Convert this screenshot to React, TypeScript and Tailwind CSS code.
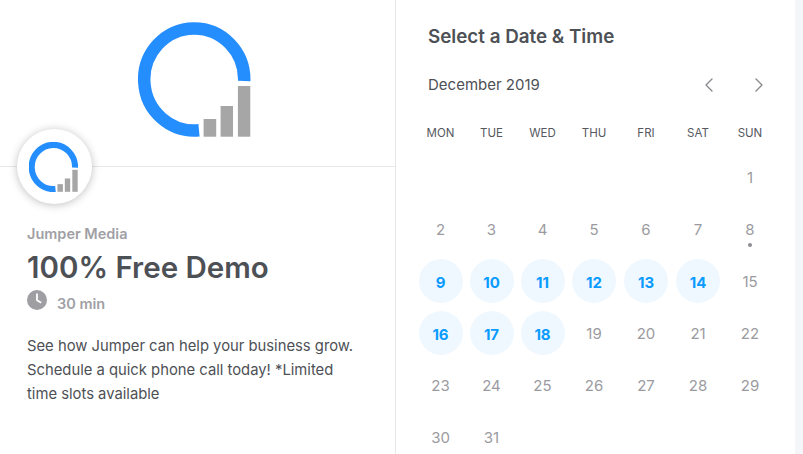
import React from 'react';
import { ChevronLeft, ChevronRight } from 'lucide-react';

const DAYS = ['MON', 'TUE', 'WED', 'THU', 'FRI', 'SAT', 'SUN'];
const AVAILABLE = [9, 10, 11, 12, 13, 14, 16, 17, 18];

const JumperLogo = ({ className, ring = 12.5 }: { className: string; ring?: number }) => (
  <svg viewBox="0 0 113 115" className={className}>
    <path
      d="M106.2 59 A50 51 0 1 0 61 108.2"
      fill="none"
      stroke="#258eff"
      strokeWidth={ring}
    />
    <rect x="65.6" y="97" width="12.6" height="17.7" fill="#a6a6a6" />
    <rect x="82.6" y="84" width="12.4" height="30.7" fill="#a6a6a6" />
    <rect x="99.9" y="64" width="12.4" height="50.7" fill="#a6a6a6" />
  </svg>
);

const ClockIcon = () => (
  <svg viewBox="0 0 20 20" className="w-5 h-5 shrink-0">
    <circle cx="10" cy="10" r="10" fill="#9e9ea3" />
    <path d="M10 3.5v6.7l4.2 2.6" fill="none" stroke="#fff" strokeWidth="1.8" />
  </svg>
);

const Day = ({ day }: { day: number }) => {
  if (AVAILABLE.includes(day)) {
    return (
      <div className="h-[52px] flex items-center justify-center">
        <div className="w-11 h-11 rounded-full bg-[#f0f8ff] flex items-center justify-center text-[15px] font-bold text-[#0a9bff] pt-1">
          {day}
        </div>
      </div>
    );
  }
  return (
    <div className="relative h-[52px] flex items-center justify-center text-[15px] text-[#9b9b9f] pt-0.5">
      {day}
      {day === 8 && (
        <div className="absolute top-[40px] left-1/2 -ml-0.5 w-1 h-1 rounded-full bg-[#8d8d92]" />
      )}
    </div>
  );
};

export default function App() {
  const cells: (number | null)[] = [null, null, null, null, null, null];
  for (let i = 1; i <= 31; i++) cells.push(i);

  return (
    <div className="w-[803px] h-[454px] overflow-hidden flex bg-white font-['Inter',sans-serif] text-[#4d5055]">
      <div className="relative w-[396px] shrink-0 border-r border-[#e8e8e8]">
        <div className="h-[167px] border-b border-[#e8e8e8] flex justify-center pt-[22px] pr-[7px]">
          <JumperLogo className="w-[113px] h-[115px]" />
        </div>
        <div className="absolute left-[17px] top-[129px] w-[75px] h-[75px] rounded-full bg-white shadow-[0_1px_8px_rgba(0,0,0,0.25)] flex items-center justify-center">
          <JumperLogo className="w-[49px] h-[50px] mr-[2px]" ring={14} />
        </div>
        <div className="pl-[27px] pr-[30px] pt-[57px]">
          <div className="text-[14.5px] leading-5 font-semibold text-[#a0a0a5]">Jumper Media</div>
          <h1 className="text-[29.5px] leading-9 font-semibold mt-[5px]">100% Free Demo</h1>
          <div className="flex items-start gap-2.5 mt-[5px] h-5">
            <ClockIcon />
            <span className="text-[14.5px] leading-5 font-semibold text-[#a0a0a5] mt-[4px]">30 min</span>
          </div>
          <p className="text-[14.8px] leading-6 mt-[24px]">
            See how Jumper can help your business grow. Schedule a quick phone call today! *Limited
            time slots available
          </p>
        </div>
      </div>
      <div className="flex-1 pl-[19px]">
        <h2 className="ml-[13px] mt-[25px] text-[18.8px] leading-6 font-semibold">Select a Date &amp; Time</h2>
        <div className="ml-[13px] mt-[24px] flex items-center h-6 w-[343px]">
          <span className="text-[15px] flex-1">December 2019</span>
          <ChevronLeft className="w-6 h-6 text-[#85858a] mr-[26px]" strokeWidth={1.25} />
          <ChevronRight className="w-6 h-6 text-[#85858a]" strokeWidth={1.25} />
        </div>
        <div className="grid grid-cols-[51px_51px_51px_52px_52px_52px_52px] mt-[26px] text-[11.5px] leading-5 text-[#55585e]">
          {DAYS.map((d) => (
            <div key={d} className="text-center">
              {d}
            </div>
          ))}
        </div>
        <div className="grid grid-cols-[51px_51px_51px_52px_52px_52px_52px] mt-[8px]">
          {cells.map((c, i) => (c === null ? <div key={i} /> : <Day key={i} day={c} />))}
        </div>
      </div>
      <div className="w-2 shrink-0 bg-[#f5f6f9]" />
    </div>
  );
}
